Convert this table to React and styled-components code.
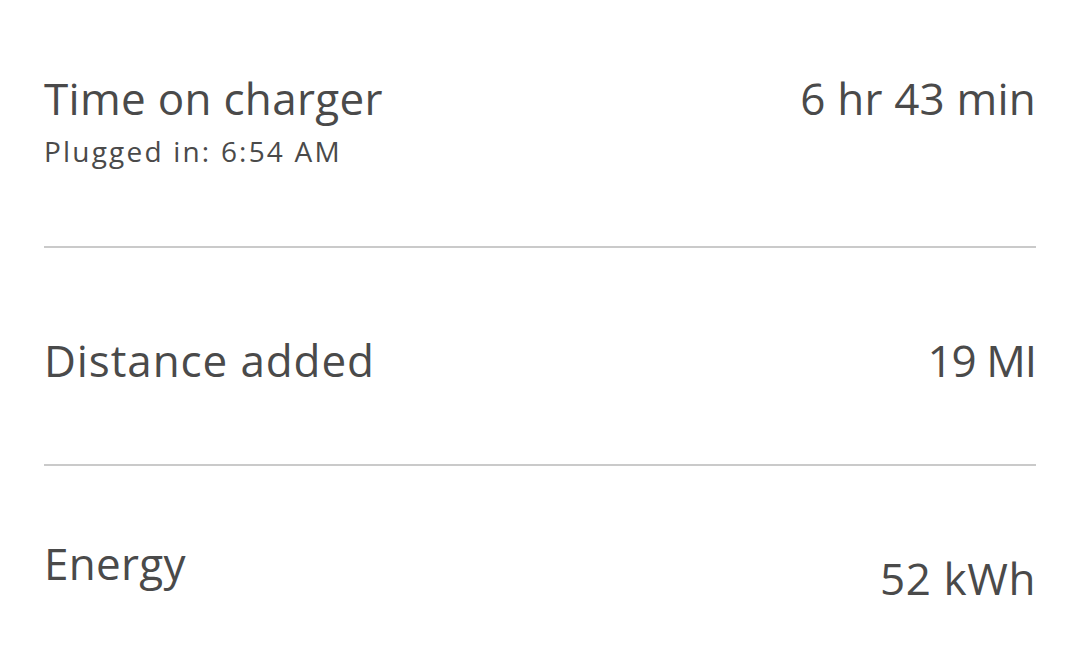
import React from 'react'
import styled, { createGlobalStyle } from 'styled-components'

const GlobalStyle = createGlobalStyle`
  html, body {
    margin: 0;
    padding: 0;
    background: #ffffff;
  }
  body {
    font-family: "Open Sans", "Noto Sans", sans-serif;
    color: #4a4a4a;
  }
`

const Page = styled.div`
  width: 1080px;
  height: 660px;
  box-sizing: border-box;
  padding: 0 44px 0 44px;
  overflow: hidden;
`

const Row = styled.div`
  display: flex;
  justify-content: space-between;
  align-items: flex-start;
  height: ${p => p.$height}px;
  padding-top: ${p => p.$top}px;
  box-sizing: border-box;
  border-bottom: ${p => (p.$last ? 'none' : '2px solid #cacaca')};
`

const LabelBlock = styled.div`
  display: flex;
  flex-direction: column;
`

const Label = styled.div`
  font-size: 44px;
  line-height: 54px;
  letter-spacing: ${p => p.$spacing ?? 0.3}px;
`

const Sub = styled.div`
  font-size: 28px;
  line-height: 36px;
  margin-top: 8px;
  letter-spacing: 2.2px;
`

const Value = styled.div`
  font-size: 44px;
  line-height: 54px;
  margin-top: ${p => p.$drop || 0}px;
  letter-spacing: ${p => p.$spacing ?? 0}px;
`

export default function App() {
  return (
    <>
      <GlobalStyle />
      <Page>
        <Row $height={248} $top={71}>
          <LabelBlock>
            <Label>Time on charger</Label>
            <Sub>Plugged in: 6:54 AM</Sub>
          </LabelBlock>
          <Value $spacing={0.2}>6 hr 43 min</Value>
        </Row>
        <Row $height={218} $top={85}>
          <Label $spacing={0.9}>Distance added</Label>
          <Value $spacing={-1}>19 MI</Value>
        </Row>
        <Row $height={194} $top={70} $last>
          <Label>Energy</Label>
          <Value $drop={15} $spacing={0.6}>52 kWh</Value>
        </Row>
      </Page>
    </>
  )
}
